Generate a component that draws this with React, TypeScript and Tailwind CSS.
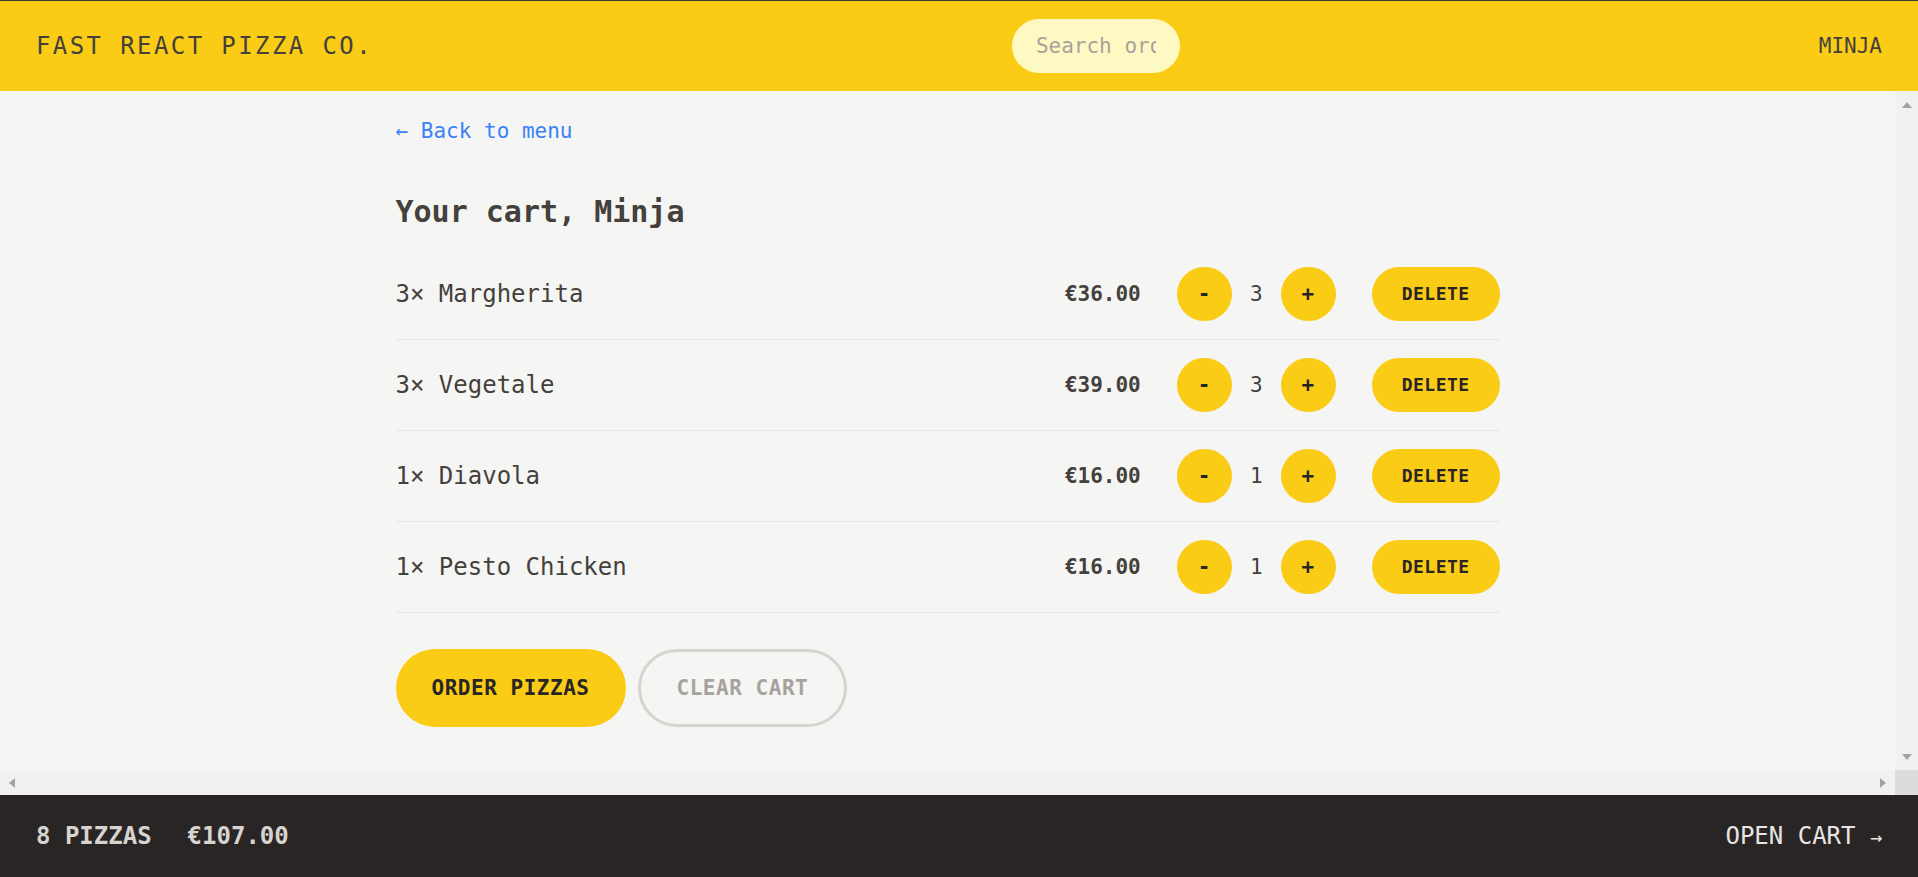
import { useState } from 'react';

const cartItems = [
    { id: 1, name: 'Margherita', quantity: 3, totalPrice: 36 },
    { id: 2, name: 'Vegetale', quantity: 3, totalPrice: 39 },
    { id: 3, name: 'Diavola', quantity: 1, totalPrice: 16 },
    { id: 4, name: 'Pesto Chicken', quantity: 1, totalPrice: 16 },
];

const formatCurrency = (value: number) => `€${value.toFixed(2)}`;

const btnBase =
    'inline-block rounded-full bg-[#facc15] font-semibold uppercase tracking-[0.025em] text-[#292524] transition-colors duration-300 hover:bg-[#fde047]';

const Arrow = ({ dir }: { dir: 'up' | 'down' | 'left' | 'right' }) => {
    const points = {
        up: '0,6 5,0 10,6',
        down: '0,0 10,0 5,6',
        left: '6,0 6,10 0,5',
        right: '0,0 6,5 0,10',
    }[dir];
    const vertical = dir === 'up' || dir === 'down';
    return (
        <svg width={vertical ? 10 : 6} height={vertical ? 6 : 10} viewBox={vertical ? '0 0 10 6' : '0 0 6 10'}>
            <polygon points={points} fill="#a3a3a3" />
        </svg>
    );
};

const CartItem = ({ item }: { item: (typeof cartItems)[number] }) => (
    <li className="flex items-center justify-between py-[18px]">
        <p className="text-[24px] leading-[36px]">
            {item.quantity}&times; {item.name}
        </p>
        <div className="flex items-center gap-[36px]">
            <p className="text-[21px] leading-[30px] font-bold">{formatCurrency(item.totalPrice)}</p>
            <div className="flex items-center gap-[18px]">
                <button className={`${btnBase} h-[54px] px-[21px] text-[21px] leading-[30px]`}>-</button>
                <span className="text-[21px] leading-[30px] font-medium">{item.quantity}</span>
                <button className={`${btnBase} h-[54px] px-[21px] text-[21px] leading-[30px]`}>+</button>
            </div>
            <button className={`${btnBase} h-[54px] px-[30px] text-[18px] leading-[24px]`}>Delete</button>
        </div>
    </li>
);

const App = () => {
    const [query, setQuery] = useState('');
    const totalQuantity = cartItems.reduce((sum, i) => sum + i.quantity, 0);
    const totalPrice = cartItems.reduce((sum, i) => sum + i.totalPrice, 0);

    return (
        <div className="grid h-screen grid-rows-[auto_1fr_auto] bg-[#f5f5f4] font-['DejaVu_Sans_Mono','Liberation_Mono',monospace] text-[#44403c]">
            {/* Header */}
            <header className="flex items-center justify-between border-t border-t-[#3c3c3c] bg-[#facc15] px-[36px] py-[18px] uppercase">
                <a href="#" className="text-[24px] leading-[36px] tracking-[0.1em]">
                    Fast React Pizza Co.
                </a>
                <input
                    value={query}
                    onChange={(e) => setQuery(e.target.value)}
                    placeholder="Search order #"
                    className="h-[54px] w-[168px] rounded-full bg-[#fef9c3] px-[24px] text-[21px] outline-none placeholder:text-[#a8a29e]"
                />
                <div className="text-[21px] leading-[30px]">Minja</div>
            </header>

            <div className="flex min-h-0 flex-col">
                <div className="flex min-h-0 flex-1">
                    <div className="min-w-0 flex-1 overflow-hidden">
                        <main className="mx-auto max-w-[1152px]">
                            <div className="px-[24px] py-[18px]">
                                <div className="mt-[3px] text-[24px] leading-[36px]">
                                    <a href="#" className="text-[21px] text-[#3b82f6] hover:text-[#1d4ed8]">
                                        &larr; Back to menu
                                    </a>
                                </div>

                                <h2 className="mt-[42px] text-[30px] leading-[42px] font-semibold">Your cart, Minja</h2>

                                <ul className="mt-[16px] divide-y divide-[#e7e5e4] border-b border-[#e7e5e4]">
                                    {cartItems.map((item) => (
                                        <CartItem key={item.id} item={item} />
                                    ))}
                                </ul>

                                <div className="mt-[36px] flex gap-[12px]">
                                    <button className={`${btnBase} px-[36px] py-[24px] text-[21px] leading-[30px]`}>
                                        Order pizzas
                                    </button>
                                    <button className="inline-block rounded-full border-[3px] border-[#d6d3d1] px-[36px] py-[21px] text-[21px] leading-[30px] font-semibold uppercase tracking-[0.025em] text-[#a8a29e]">
                                        Clear cart
                                    </button>
                                </div>
                            </div>
                        </main>
                    </div>
                    <div className="flex w-[23px] flex-col items-center justify-between bg-[#f1f1f1] pt-[11px] pb-[10px]">
                        <Arrow dir="up" />
                        <Arrow dir="down" />
                    </div>
                </div>
                <div className="flex h-[25px]">
                    <div className="flex flex-1 items-center justify-between bg-[#f1f1f1] px-[9px]">
                        <Arrow dir="left" />
                        <Arrow dir="right" />
                    </div>
                    <div className="w-[23px] bg-[#dcdcdc]" />
                </div>
            </div>

            {/* Cart overview */}
            <div className="flex h-[82px] items-center justify-between bg-[#292524] px-[36px] text-[24px] leading-[36px] uppercase text-[#e7e5e4]">
                <p className="flex gap-[36px] font-semibold text-[#d6d3d1]">
                    <span>{totalQuantity} pizzas</span>
                    <span>{formatCurrency(totalPrice)}</span>
                </p>
                <a href="#">
                    Open cart <span className="text-[20px]">&rarr;</span>
                </a>
            </div>
        </div>
    );
};

export default App;
